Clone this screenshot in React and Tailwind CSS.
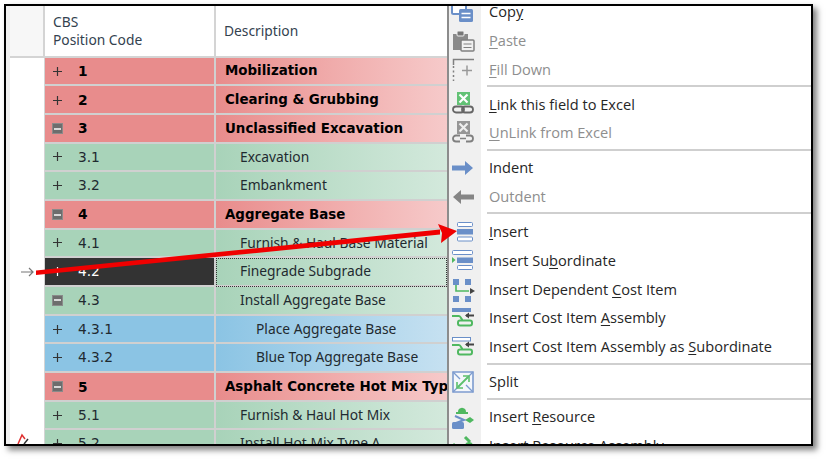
import React from 'react';

const GRID_FONT = 'font-["Noto_Sans",sans-serif]';

const rows = [
  { code: '1', text: 'Mobilization', kind: 'red' },
  { code: '2', text: 'Clearing & Grubbing', kind: 'red' },
  { code: '3', text: 'Unclassified Excavation', kind: 'red', open: true },
  { code: '3.1', text: 'Excavation', kind: 'green' },
  { code: '3.2', text: 'Embankment', kind: 'green' },
  { code: '4', text: 'Aggregate Base', kind: 'red', open: true },
  { code: '4.1', text: 'Furnish & Haul Base Material', kind: 'green' },
  { code: '4.2', text: 'Finegrade Subgrade', kind: 'green', selected: true },
  { code: '4.3', text: 'Install Aggregate Base', kind: 'green', open: true },
  { code: '4.3.1', text: 'Place Aggregate Base', kind: 'blue' },
  { code: '4.3.2', text: 'Blue Top Aggregate Base', kind: 'blue' },
  { code: '5', text: 'Asphalt Concrete Hot Mix Type A', kind: 'red', open: true },
  { code: '5.1', text: 'Furnish & Haul Hot Mix', kind: 'green' },
  { code: '5.2', text: 'Install Hot Mix Type A', kind: 'green' },
];

const styles = {
  red: {
    code: 'bg-[#e88c8c] font-bold text-black pt-[1px]',
    desc: "bg-gradient-to-r from-[#e88c8c] to-[#f6caca] font-['DejaVu_Sans',sans-serif] text-[13.4px] font-bold text-black pl-[9px] pt-[1px]",
  },
  green: {
    code: 'bg-[#a8d3b9] text-[#1f2a30]',
    desc: 'bg-gradient-to-r from-[#a8d3b9] to-[#d3e9dc] text-[13.8px] text-[#1f2a30] pl-[24px]',
  },
  blue: {
    code: 'bg-[#8bc4e4] text-[#1f2a30]',
    desc: 'bg-gradient-to-r from-[#8bc4e4] to-[#c6e1f1] text-[13.8px] text-[#1f2a30] pl-[40px]',
  },
};

const Expander = ({ open, light }) =>
  open ? (
    <span className="flex h-[11px] w-[11px] items-center justify-center border border-[#8a8a8a] bg-[#6d6d6d]">
      <span className="h-[2px] w-[7px] bg-[#d8d8d8]" />
    </span>
  ) : (
    <svg width="11" height="11" viewBox="0 0 11 11" className={light ? 'text-white' : 'text-[#333]'}>
      <path d="M5.5 1v9M1 5.5h9" stroke="currentColor" strokeWidth="1.2" />
    </svg>
  );

const GridRow = ({ row }) => {
  const s = styles[row.kind];
  return (
    <div className="flex h-[28.7px] shrink-0">
      <div className="w-[35px] shrink-0 border-r border-[#d4d4d4] bg-white" />
      <div
        className={`flex w-[171px] shrink-0 items-center border-b-2 border-r-2 border-[#d0d0d0] pl-[7px] font-['DejaVu_Sans',sans-serif] text-[13.75px] ${
          row.selected ? 'bg-[#333333] text-white' : s.code
        }`}
      >
        <Expander open={row.open} light={row.selected} />
        <span className="ml-[15px]">{row.code}</span>
      </div>
      <div className={`flex flex-1 items-center overflow-hidden whitespace-nowrap border-b-2 border-[#d0d0d0] ${s.desc} ${row.selected ? 'outline-dotted outline-1 -outline-offset-1 outline-[#333]' : ''}`}>
        {row.text}
      </div>
    </div>
  );
};

const Sep = () => (
  <div className="h-[6.2px] shrink-0 pl-[38px] pt-[1px]">
    <div className="h-[2px] bg-[#cfcfcf]" />
  </div>
);

const U = ({ children }) => <span className="underline underline-offset-2">{children}</span>;

// menu icons, all drawn on a 24 box
const icons = {
  copy: (
    <>
      <rect x="1" y="2" width="14" height="12" rx="1.5" fill="#fff" stroke="#6a8fc8" strokeWidth="2" />
      <rect x="8" y="9" width="14" height="13" rx="1.5" fill="#6a8fc8" />
      <path d="M10.5 13.5h9M10.5 17.5h9" stroke="#fff" strokeWidth="1.5" />
    </>
  ),
  paste: (
    <>
      <path d="M2 5h15v16H2z" fill="#8a8a8a" />
      <rect x="6" y="2" width="7" height="5" rx="1" fill="#777" stroke="#f0f0f0" />
      <rect x="10" y="11" width="13" height="11" rx="1" fill="#f0f0f0" stroke="#808080" strokeWidth="1.5" />
      <path d="M12.5 15h8M12.5 18.5h8" stroke="#808080" />
    </>
  ),
  fill: (
    <>
      <path d="M2.5 8V2.5H23" fill="none" stroke="#808080" strokeWidth="1.5" />
      <path d="M2.5 9v15" fill="none" stroke="#808080" strokeWidth="1.5" strokeDasharray="2 2.5" />
      <path d="M16 8.5v10M11 13.5h10" stroke="#999" strokeWidth="1.5" />
    </>
  ),
  link: (
    <>
      <rect x="6" y="0" width="13" height="13" fill="#62c275" />
      <path d="M8.5 2.5l8 8M16.5 2.5l-8 8" stroke="#fff" strokeWidth="2.2" />
      <rect x="2" y="14.5" width="11" height="6" rx="3" fill="none" stroke="#666" strokeWidth="1.8" />
      <rect x="11" y="14.5" width="11" height="6" rx="3" fill="none" stroke="#666" strokeWidth="1.8" />
    </>
  ),
  unlink: (
    <>
      <rect x="6" y="0" width="13" height="13" fill="#969696" />
      <path d="M8.5 2.5l8 8M16.5 2.5l-8 8" stroke="#eee" strokeWidth="2.2" />
      <path d="M9 14.5H5a3 3 0 0 0 0 6h4M15 14.5h4a3 3 0 0 1 0 6h-4" fill="none" stroke="#808080" strokeWidth="1.8" />
      <path d="M9 17.5h6" stroke="#808080" strokeWidth="1.5" />
    </>
  ),
  indent: <path d="M1 9.5h13V5l8 7-8 7v-4.5H1z" fill="#6a8fc8" />,
  outdent: <path d="M23 9.5H10V5l-8 7 8 7v-4.5h13z" fill="#858585" />,
  insert: (
    <>
      <rect x="6.5" y="2.5" width="15" height="4" rx="1" fill="#fff" stroke="#6a8fc8" />
      <rect x="6" y="9" width="16" height="5.5" fill="#6a8fc8" />
      <rect x="6.5" y="17" width="15" height="4" rx="1" fill="#fff" stroke="#6a8fc8" />
    </>
  ),
  sub: (
    <>
      <rect x="1.5" y="1.5" width="20" height="4" rx="1" fill="#fff" stroke="#6a8fc8" />
      <rect x="6" y="8.5" width="16" height="5.5" fill="#6a8fc8" />
      <rect x="6.5" y="16.5" width="15" height="4" rx="1" fill="#fff" stroke="#6a8fc8" />
      <path d="M1 8l3.5 3L1 14z" fill="#4fb860" />
    </>
  ),
  dep: (
    <>
      <rect x="2" y="1" width="6" height="6" fill="#6a8fc8" />
      <rect x="14" y="1" width="6" height="6" fill="#6a8fc8" />
      <rect x="2" y="18" width="6" height="6" fill="#6a8fc8" />
      <rect x="14" y="18" width="6" height="6" fill="#6a8fc8" />
      <path d="M5 7v6h13" fill="none" stroke="#4fb860" strokeWidth="1.6" />
      <path d="M19 10l5 3-5 3z" fill="#444" />
    </>
  ),
  assembly: (
    <>
      <rect x="1" y="2" width="19" height="4" fill="#6a8fc8" />
      <path d="M1 10h7c2 0 2 4 4 4" fill="none" stroke="#4fb860" strokeWidth="2" />
      <rect x="7" y="14.5" width="14" height="5" rx="2" fill="none" stroke="#4fb860" strokeWidth="2" />
      <path d="M15 9.5h8" stroke="#444" strokeWidth="2" />
      <path d="M18 6.5l-4 3 4 3z" fill="#444" />
    </>
  ),
  assemblySub: (
    <>
      <rect x="1.5" y="2.5" width="18" height="3.5" fill="#fff" stroke="#6a8fc8" />
      <path d="M1 10h7c2 0 2 4 4 4" fill="none" stroke="#4fb860" strokeWidth="2" />
      <rect x="7" y="14.5" width="14" height="5" rx="2" fill="none" stroke="#4fb860" strokeWidth="2" />
      <path d="M15 9.5h8" stroke="#444" strokeWidth="2" />
      <path d="M18 6.5l-4 3 4 3z" fill="#444" />
    </>
  ),
  split: (
    <>
      <path d="M2 2h20v20H2z" fill="#f4f7fb" stroke="#7d9ccf" strokeWidth="1.6" />
      <path d="M2 2l7 7M22 22l-7-7M22 2l-7 7M2 22l7-7" stroke="#7d9ccf" strokeWidth="1.4" />
      <path d="M7 17L17 7" stroke="#5cc06c" strokeWidth="1.8" />
      <path d="M12 6h6v6M6 12v6h6" fill="none" stroke="#5cc06c" strokeWidth="1.6" />
    </>
  ),
  resource: (
    <>
      <path d="M7 7a4 4 0 0 1 8 0z" fill="#4fb860" />
      <rect x="5" y="7" width="12" height="2" fill="#4fb860" />
      <circle cx="11" cy="4" r="1.2" fill="#4fb860" />
      <path d="M14 15l5-3 4 3-4 3z" fill="#4fb860" />
      <path d="M4 11l9 4-8 3" fill="none" stroke="#6a8fc8" strokeWidth="2" />
      <rect x="1" y="17" width="12" height="7" rx="1.5" fill="#6a8fc8" />
    </>
  ),
  resourceAsm: (
    <>
      <path d="M2 10l4 4M14 3l5 5" stroke="#4fb860" strokeWidth="3" />
      <circle cx="18" cy="12" r="4" fill="#4fb860" />
      <rect x="2" y="17" width="12" height="7" fill="#6a8fc8" />
    </>
  ),
};

const items = [
  { icon: 'copy', label: <>Cop<U>y</U></> },
  { icon: 'paste', label: <><U>P</U>aste</>, off: true },
  { icon: 'fill', label: <><U>F</U>ill Down</>, off: true },
  { sep: true },
  { icon: 'link', label: <><U>L</U>ink this field to Excel</> },
  { icon: 'unlink', label: <><U>U</U>nLink from Excel</>, off: true },
  { sep: true },
  { icon: 'indent', label: 'Indent' },
  { icon: 'outdent', label: 'Outdent', off: true },
  { sep: true },
  { icon: 'insert', label: <><U>I</U>nsert</> },
  { icon: 'sub', label: <>Insert Su<U>b</U>ordinate</> },
  { icon: 'dep', label: <>Insert Dependent <U>C</U>ost Item</> },
  { icon: 'assembly', label: <>Insert Cost Item <U>A</U>ssembly</> },
  { icon: 'assemblySub', label: <>Insert Cost Item Assembly as <U>S</U>ubordinate</> },
  { sep: true },
  { icon: 'split', label: 'Split' },
  { sep: true },
  { icon: 'resource', label: <>Insert <U>R</U>esource</> },
  { icon: 'resourceAsm', label: <>Insert Resource Assembly</> },
];

const MenuItem = ({ item }) => (
  <div className="flex h-[28.8px] shrink-0 items-center">
    <div className="flex h-full w-[32px] shrink-0 items-center pl-[2px]">
      <svg width="24" height="24" viewBox="0 0 24 24">{icons[item.icon]}</svg>
    </div>
    <span className={`ml-[8px] whitespace-nowrap ${item.off ? 'text-[#8e8e8e]' : 'text-[#262626]'}`}>{item.label}</span>
  </div>
);

const ContextMenu = () => (
  <div className="relative flex h-full w-[364px] shrink-0 flex-col overflow-hidden border-l-2 border-[#8c8c8c] bg-white font-['Open_Sans',sans-serif] text-[14.6px]">
    {/* icon strip runs behind the items */}
    <div className="absolute inset-y-0 left-0 w-[32px] bg-[#f0f0f0]" />
    <div className="relative -mt-[8.5px] flex flex-col">
      {items.map((item, i) => (item.sep ? <Sep key={i} /> : <MenuItem key={i} item={item} />))}
    </div>
  </div>
);

export default function App() {
  return (
    <div className="relative h-[459px] w-[826px] overflow-hidden bg-white pl-[4px] pt-[4px]">
      <div className="flex h-[442px] w-[809px] overflow-hidden border-2 border-black bg-white shadow-[4px_4px_6px_rgba(0,0,0,0.5)]">
        <div className="flex min-w-0 flex-1">
          <div className="w-[4px] shrink-0 bg-[#f0f0f0]" />
          <div className={`flex min-w-0 flex-1 flex-col ${GRID_FONT}`}>
            <div className="flex h-[51.5px] shrink-0 border-b-2 border-[#d4d4d4] text-[13.8px] leading-[18px] text-[#33424f]">
              <div className="w-[35px] shrink-0 border-r-2 border-[#d4d4d4] bg-[#f7f7f7]" />
              <div className="flex w-[171px] shrink-0 flex-col justify-center border-r-2 border-[#d4d4d4] pl-[8px]">
                <span>CBS</span>
                <span>Position Code</span>
              </div>
              <div className="flex flex-1 items-center pl-[8px]">Description</div>
            </div>
            {rows.map((row) => (
              <GridRow key={row.code} row={row} />
            ))}
          </div>
        </div>
        <ContextMenu />
      </div>

      {/* row pointer, callout arrow and the clipped flag drawn over the screenshot */}
      <svg className="pointer-events-none absolute left-0 top-0" width="826" height="459" viewBox="0 0 826 459">
        <path d="M21 272h12M29 268l4 4-4 4" fill="none" stroke="#777" strokeWidth="1.2" />
        <path d="M36 270.5L440 229.5V234.5L36 275z" fill="#f00000" />
        <path d="M438 224L457 231L441 243L442 233z" fill="#f00000" />
        <path d="M18 444l4-9 3 4" fill="none" stroke="#e03030" strokeWidth="1.5" />
        <path d="M24 444l4-5" fill="none" stroke="#333" strokeWidth="1.5" />
      </svg>
    </div>
  );
}
